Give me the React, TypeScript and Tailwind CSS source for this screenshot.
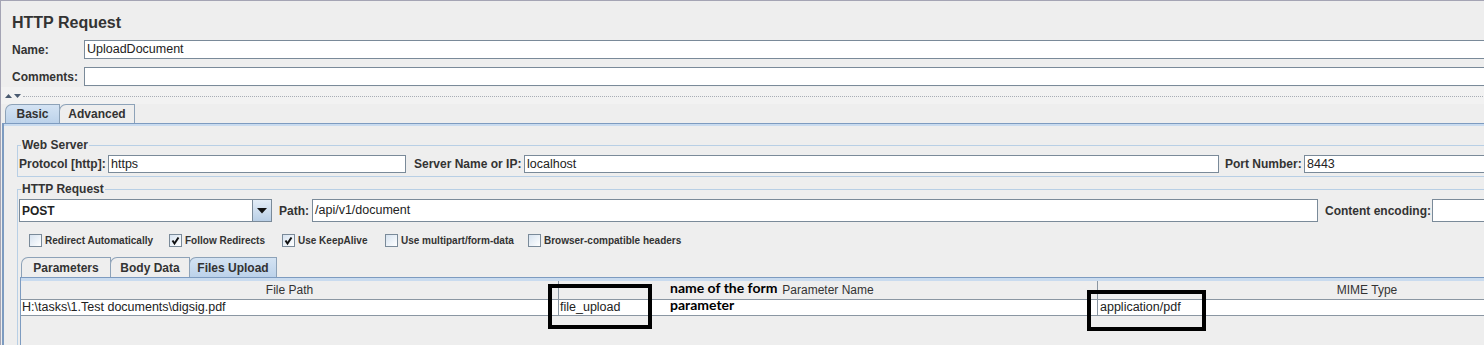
import React from "react";

const inputCls = "h-full bg-white border border-[#7a8a99] text-[12.5px] leading-none text-[#222] pl-[2px] flex items-center whitespace-nowrap";

function Check({ checked, label, w }: { checked?: boolean; label: string; w: string }) {
  return (
    <div className={`flex items-center gap-[3px] ${w}`}>
      <div className="w-[13px] h-[13px] border border-[#7a8a99] bg-gradient-to-br from-[#d7e3f0] to-white flex items-center justify-center">
        {checked && (
          <svg width="11" height="11" viewBox="0 0 11 11">
            <polyline points="2.5,5.5 4.5,8.5 8.5,2.5" fill="none" stroke="#111" strokeWidth="2" />
          </svg>
        )}
      </div>
      <span className="text-[10px] font-bold text-[#333] whitespace-nowrap">{label}</span>
    </div>
  );
}

function Tab({ label, active, w }: { label: string; active?: boolean; w: string }) {
  return (
    <div
      className={`h-full ${w} -mr-px border border-b-0 border-[#8da2b8] rounded-tl-[7px] flex items-center justify-center text-[12px] font-bold text-[#333] ${
        active ? "bg-gradient-to-b from-[#d4e3f3] to-[#bcd2ea]" : "bg-[#eeeeee]"
      }`}
    >
      {label}
    </div>
  );
}

export default function App() {
  return (
    <div className="w-[1484px] h-[345px] overflow-hidden relative bg-[#eeeeee] border-t border-l border-[#a4a4b4] font-['Liberation_Sans',Arial,sans-serif] text-[#333]">
      <div className="w-[1660px]">
        <div className="h-[39px] pl-[11px] pt-[12px] text-[16px] leading-[20px] font-bold">HTTP Request</div>

        <div className="flex items-center h-[19px] pl-[11px]">
          <span className="w-[72px] text-[12px] font-bold">Name:</span>
          <div className={`${inputCls} flex-1`}>UploadDocument</div>
        </div>
        <div className="flex items-center h-[19px] pl-[11px] mt-[8px]">
          <span className="w-[72px] text-[12px] font-bold">Comments:</span>
          <div className={`${inputCls} flex-1`} />
        </div>

        {/* split pane divider */}
        <div className="h-[17px] flex items-center pl-[4px] bg-[#f2f2f2] mt-[1px]">
          <svg width="18" height="6" viewBox="0 0 18 6" className="shrink-0 mt-[1px]">
            <polygon points="0,5 3.5,1 7,5" fill="#4a5a70" />
            <polygon points="9,1 16,1 12.5,5" fill="#4a5a70" />
          </svg>
          <div className="flex-1 border-t border-dotted border-[#a8adb5] mt-[1px]" />
        </div>

        {/* Basic / Advanced tabs */}
        <div className="flex h-[19px] pl-[4px]">
          <Tab label="Basic" active w="w-[55px]" />
          <Tab label="Advanced" w="w-[76px]" />
        </div>

        <div className="ml-[1px] border-l-2 border-t border-[#7d9bc0] h-[230px]">
          <div className="h-[2px] bg-[#c9dbef]" />

          {/* Web Server */}
          <fieldset className="ml-[13px] mt-[12px] border border-[#b8cfe5] pb-[3px]">
            <legend className="ml-[3px] px-[1px] text-[12px] leading-[14px] font-bold">Web Server</legend>
            <div className="flex items-center h-[18px] mt-[3px] pl-[1px]">
              <span className="w-[89px] text-[12px] font-bold whitespace-nowrap">Protocol [http]:</span>
              <div className={`${inputCls} w-[298px]`}>https</div>
              <span className="ml-[8px] w-[110px] text-[12px] font-bold whitespace-nowrap">Server Name or IP:</span>
              <div className={`${inputCls} w-[695px]`}>localhost</div>
              <span className="ml-[6px] w-[79px] text-[12px] font-bold whitespace-nowrap">Port Number:</span>
              <div className={`${inputCls} flex-1`}>8443</div>
            </div>
          </fieldset>

          {/* HTTP Request */}
          <fieldset className="ml-[13px] mt-[5px] border border-[#b8cfe5] h-[200px]">
            <legend className="ml-[3px] px-[1px] text-[12px] leading-[14px] font-bold">HTTP Request</legend>
            <div className="flex items-center h-[23px] mt-[3px] pl-[1px]">
              <div className="w-[253px] h-full flex border border-[#7a8a99] bg-white">
                <div className="flex-1 flex items-center pl-[2px] text-[12px] font-bold text-[#222]">POST</div>
                <div className="w-[19px] border-l border-[#7a8a99] bg-gradient-to-b from-[#e4edf7] to-[#b9cfe6] flex items-center justify-center">
                  <svg width="10" height="6" viewBox="0 0 10 6">
                    <polygon points="0,0 10,0 5,5.5" fill="#111" />
                  </svg>
                </div>
              </div>
              <span className="ml-[7px] w-[33px] text-[12px] font-bold">Path:</span>
              <div className={`${inputCls} w-[1006px]`}>/api/v1/document</div>
              <span className="ml-[7px] w-[107px] text-[12px] font-bold whitespace-nowrap">Content encoding:</span>
              <div className={`${inputCls} flex-1`} />
            </div>

            <div className="flex items-center h-[14px] mt-[11px] pl-[11px]">
              <Check label="Redirect Automatically" w="w-[140px]" />
              <Check label="Follow Redirects" checked w="w-[113px]" />
              <Check label="Use KeepAlive" checked w="w-[103px]" />
              <Check label="Use multipart/form-data" w="w-[143px]" />
              <Check label="Browser-compatible headers" w="w-[160px]" />
            </div>

            {/* Parameters / Body Data / Files Upload */}
            <div className="ml-[2px] mt-[10px]">
              <div className="flex h-[20px] pl-[1px]">
                <Tab label="Parameters" w="w-[90px]" />
                <Tab label="Body Data" w="w-[80px]" />
                <Tab label="Files Upload" active w="w-[88px]" />
              </div>
              <div className="border-l border-t border-[#7d9bc0] h-[120px]">
                <div className="h-[3px] bg-[#c9dbef]" />
                <div className="grid grid-cols-[537px_539px_539px] text-[12px]">
                  <div className="h-[19px] flex items-center justify-center border-b border-[#8a96a2]">File Path</div>
                  <div className="h-[19px] flex items-center justify-center border-b border-l border-[#8a96a2]">Parameter Name</div>
                  <div className="h-[19px] flex items-center justify-center border-b border-l border-[#8a96a2]">MIME Type</div>
                  <div className="h-[16px] bg-white flex items-center pl-[1px] border-b border-[#8a96a2] text-[#222] text-[12.5px]">H:\tasks\1.Test documents\digsig.pdf</div>
                  <div className="h-[16px] bg-white flex items-center pl-[1px] border-b border-l border-[#8a96a2] text-[#222] text-[12.5px]">file_upload</div>
                  <div className="h-[16px] bg-white flex items-center pl-[2px] border-b border-l border-[#8a96a2] text-[#222] text-[12.5px]">application/pdf</div>
                </div>
              </div>
            </div>
          </fieldset>
        </div>
      </div>

      {/* annotations */}
      <div className="absolute left-[547px] top-[283px] w-[104px] h-[45px] border-4 border-black" />
      <div className="absolute left-[1086px] top-[289px] w-[119px] h-[41px] border-4 border-black" />
      <div className="absolute left-[669px] top-[278px] font-['Lato',sans-serif] font-bold text-[14px] leading-[17px] text-black">
        <div>name of the form</div>
        <div>parameter</div>
      </div>
    </div>
  );
}
